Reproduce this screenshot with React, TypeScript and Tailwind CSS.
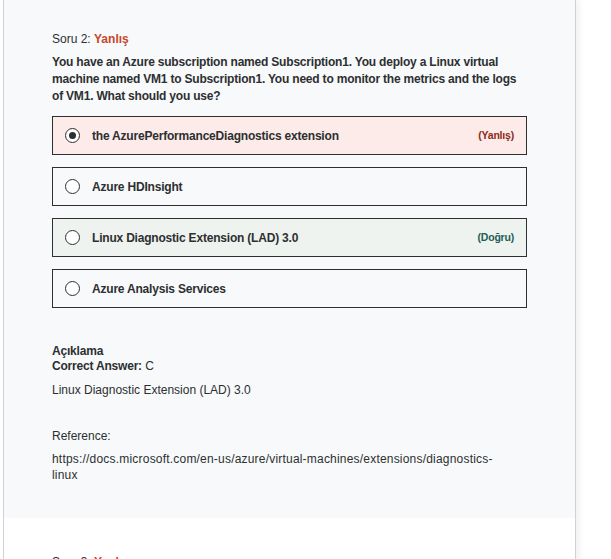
import React from 'react'

type Option = {
  text: string
  checked?: boolean
  status?: 'wrong' | 'right'
}

const options: Option[] = [
  { text: 'the AzurePerformanceDiagnostics extension', checked: true, status: 'wrong' },
  { text: 'Azure HDInsight' },
  { text: 'Linux Diagnostic Extension (LAD) 3.0', status: 'right' },
  { text: 'Azure Analysis Services' },
]

function Radio({ checked }: { checked?: boolean }) {
  return (
    <span className="flex h-[15px] w-[15px] shrink-0 items-center justify-center rounded-full border-[1.5px] border-[#2d2f31] bg-white">
      {checked && <span className="h-[7px] w-[7px] rounded-full bg-[#2d2f31]" />}
    </span>
  )
}

function OptionRow({ option }: { option: Option }) {
  const bg =
    option.status === 'wrong'
      ? 'bg-[#fcebe8]'
      : option.status === 'right'
        ? 'bg-[#eef3ef]'
        : ''
  return (
    <div className={`flex h-[39px] items-center gap-[12px] border border-[#2d2f31] px-[12px] ${bg}`}>
      <Radio checked={option.checked} />
      <span className="flex-1 text-[12px] font-bold tracking-[-0.2px] text-[#2d2f31]">{option.text}</span>
      {option.status === 'wrong' && (
        <span className="text-[10.5px] font-bold tracking-[-0.2px] text-[#8e2a1c]">(Yanlış)</span>
      )}
      {option.status === 'right' && (
        <span className="text-[10.5px] font-bold tracking-[-0.2px] text-[#1e6055]">(Doğru)</span>
      )}
    </div>
  )
}

export default function App() {
  return (
    <div className="min-h-screen bg-white pl-[3px] font-['Liberation_Sans',Arial,sans-serif] text-[#2d2f31]">
      <div className="w-[573px] border-x border-[#d1d2d8] shadow-[4px_0_6px_rgba(0,0,0,0.05)]">
        {/* Question 2 */}
        <div className="bg-[#f7f9fa] px-[48px] pt-[31px] pb-[35px]">
          <p className="text-[12px] leading-[16px]">
            Soru 2: <span className="font-bold text-[#c8462c]">Yanlış</span>
          </p>
          <p className="mt-[7px] text-[12px] font-bold leading-[17px] tracking-[-0.2px]">
            You have an Azure subscription named Subscription1. You deploy a Linux virtual machine named VM1 to
            Subscription1. You need to monitor the metrics and the logs of VM1. What should you use?
          </p>

          <div className="mt-[11px] flex flex-col gap-[12px]">
            {options.map((o) => (
              <OptionRow key={o.text} option={o} />
            ))}
          </div>

          <div className="mt-[36px] text-[12px]">
            <p className="font-bold leading-[15px] tracking-[-0.2px]">Açıklama</p>
            <p className="leading-[15px]">
              <span className="font-bold tracking-[-0.2px]">Correct Answer:</span> C
            </p>
            <p className="mt-[8px] leading-[16px]">Linux Diagnostic Extension (LAD) 3.0</p>
            <p className="mt-[7px] h-[16px] leading-[16px]"></p>
            <p className="mt-[7px] leading-[16px]">Reference:</p>
            <p className="mt-[7px] leading-[16px] tracking-[0.2px]">
              https://docs.microsoft.com/en-us/azure/virtual-machines/extensions/diagnostics-
              <br />
              linux
            </p>
          </div>
        </div>

        {/* Question 3 (cut off) */}
        <div className="bg-white px-[48px] pt-[36px] pb-[40px]">
          <p className="text-[12px] leading-[16px]">
            Soru 3: <span className="font-bold text-[#c8462c]">Yanlış</span>
          </p>
        </div>
      </div>
    </div>
  )
}
